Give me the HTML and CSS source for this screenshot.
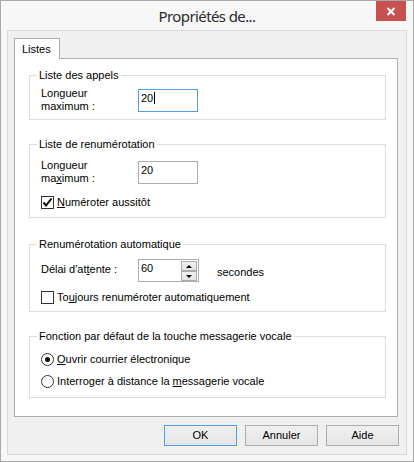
FILE: index.html
```html
<!DOCTYPE html>
<html lang="fr">
<head>
    <meta charset="UTF-8">
    <title>Propriétés de...</title>
    <link rel="stylesheet" href="styles.css">
</head>
<body>
    <div class="window">
        <div class="titlebar">
            <span class="title">Propriétés de...</span>
            <div class="close">
                <svg width="10" height="9" viewBox="0 0 10 9"><path d="M1.5 1 L8.5 8 M8.5 1 L1.5 8" stroke="#fff" stroke-width="2"/></svg>
            </div>
        </div>

        <div class="client">
            <div class="tabs">
                <div class="tab">Listes</div>
            </div>

            <div class="page">
                <!-- Liste des appels -->
                <fieldset class="group g-calls">
                    <legend>Liste des appels</legend>
                    <div class="row">
                        <div class="field-label">Longueur<br>maximum :</div>
                        <div class="edit focused">20<span class="caret"></span></div>
                    </div>
                </fieldset>

                <!-- Liste de renumérotation -->
                <fieldset class="group g-redial">
                    <legend>Liste de renumérotation</legend>
                    <div class="row">
                        <div class="field-label">Longueur<br>ma<u>x</u>imum :</div>
                        <div class="edit">20</div>
                    </div>
                    <div class="check-row">
                        <span class="checkbox checked">
                            <svg width="11" height="11" viewBox="0 0 11 11"><path d="M1.5 5.5 L4 8.5 L9.5 1.5" fill="none" stroke="#000" stroke-width="2"/></svg>
                        </span>
                        <span><u>N</u>uméroter aussitôt</span>
                    </div>
                </fieldset>

                <!-- Renumérotation automatique -->
                <fieldset class="group g-auto">
                    <legend>Renumérotation automatique</legend>
                    <div class="row center">
                        <div class="field-label">Délai d'at<u>t</u>ente :</div>
                        <div class="edit spin">
                            60
                            <div class="spin-buttons">
                                <div class="spin-btn"><span class="arrow up"></span></div>
                                <div class="spin-btn"><span class="arrow down"></span></div>
                            </div>
                        </div>
                        <span class="unit">secondes</span>
                    </div>
                    <div class="check-row">
                        <span class="checkbox"></span>
                        <span>To<u>u</u>jours renuméroter automatiquement</span>
                    </div>
                </fieldset>

                <!-- Touche messagerie vocale -->
                <fieldset class="group g-voice">
                    <legend>Fonction par défaut de la touche messagerie vocale</legend>
                    <div class="radio-row">
                        <span class="radio checked"></span>
                        <span><u>O</u>uvrir courrier électronique</span>
                    </div>
                    <div class="radio-row">
                        <span class="radio"></span>
                        <span>Interroger à distance la <u>m</u>essagerie vocale</span>
                    </div>
                </fieldset>
            </div>

            <div class="buttons">
                <div class="btn default">OK</div>
                <div class="btn">Annuler</div>
                <div class="btn">Aide</div>
            </div>
        </div>
    </div>
</body>
</html>
```

FILE: styles.css
```css
body {
    margin: 0;
    font-family: 'Liberation Sans', Arial, sans-serif;
    font-size: 11px;
    color: #000;
}
u {
    text-decoration-thickness: 1px;
    text-underline-offset: 1px;
}
.window {
    position: relative;
    width: 414px;
    height: 462px;
    box-sizing: border-box;
    border: 1px solid #a9a9a9;
    background: #f7f7f7;
    display: flex;
    flex-direction: column;
}
.titlebar {
    height: 29px;
    line-height: 30px;
    text-align: center;
    flex-shrink: 0;
}
.title {
    font-family: 'Noto Sans', sans-serif;
    font-size: 15px;
    letter-spacing: -0.6px;
    color: #2b2b2b;
}
.close {
    position: absolute;
    top: 0;
    right: 7px;
    width: 30px;
    height: 20px;
    background: #c75050;
    display: flex;
    align-items: center;
    justify-content: center;
}
.close svg { display: block; }

.client {
    margin: 0 6px 6px 6px;
    flex: 1;
    border: 1px solid #d9d9d9;
    background: #f0f0f0;
    padding: 7px 7px 0 6px;
    display: flex;
    flex-direction: column;
}
.tabs {
    display: flex;
    position: relative;
    z-index: 1;
    margin-bottom: -1px;
}
.tab {
    width: 46px;
    height: 21px;
    box-sizing: border-box;
    border: 1px solid #adadad;
    border-bottom: none;
    background: #fff;
    padding: 4px 0 0 7px;
    line-height: 13px;
}
.page {
    width: 384px;
    height: 359px;
    box-sizing: border-box;
    border: 1px solid #adadad;
    background: #fff;
    padding-top: 10px;
}

/* group boxes */
.group {
    margin: 0 11px 0 14px;
    padding: 0 11px;
    border: 1px solid #dcdcdc;
    min-inline-size: 0;
}
.group legend {
    margin-left: -4px;
    padding: 0 2px;
    line-height: 13px;
}
.g-calls { padding-bottom: 6px; }
.g-redial { margin-top: 18px; padding-bottom: 8px; }
.g-auto { margin-top: 20px; padding-bottom: 7px; }
.g-voice { margin-top: 18px; padding-bottom: 9px; }

.row {
    display: flex;
    align-items: flex-start;
}
.g-calls .row { margin-top: 5px; }
.g-redial .row { margin-top: 8px; }
.g-auto .row { margin-top: 8px; }
.field-label {
    width: 97px;
    line-height: 13px;
}
.row .edit { margin-top: 2px; }
.row.center { align-items: center; }
.row.center .edit { margin-top: 0; }
.row.center .field-label { margin-top: -2px; }

.edit {
    position: relative;
    width: 60px;
    height: 23px;
    box-sizing: border-box;
    border: 1px solid #abadb3;
    background: #fff;
    padding: 2px 2px;
    line-height: 13px;
}
.edit.focused { border-color: #569de5; }
.caret {
    display: inline-block;
    width: 1px;
    height: 12px;
    background: #000;
    vertical-align: -2px;
    margin-left: 1px;
}
.spin { width: 61px; }
.spin-buttons {
    position: absolute;
    top: 1px;
    right: 1px;
    display: flex;
    flex-direction: column;
}
.spin-btn {
    width: 16px;
    height: 10px;
    box-sizing: border-box;
    border: 1px solid #acacac;
    background: linear-gradient(#f2f2f2, #e4e4e4);
    display: flex;
    align-items: center;
    justify-content: center;
}
.arrow {
    width: 0;
    height: 0;
    border-left: 3px solid transparent;
    border-right: 3px solid transparent;
}
.arrow.up { border-bottom: 3px solid #000; }
.arrow.down { border-top: 3px solid #000; }
.unit {
    margin-left: 18px;
    margin-top: 3px;
}

.check-row,
.radio-row {
    display: flex;
    align-items: center;
    gap: 3px;
    height: 13px;
    line-height: 13px;
}
.g-redial .check-row { margin-top: 11px; }
.g-auto .check-row { margin-top: 9px; }
.g-voice .radio-row:first-of-type { margin-top: 10px; }
.g-voice .radio-row + .radio-row { margin-top: 9px; }

.checkbox {
    width: 13px;
    height: 13px;
    box-sizing: border-box;
    border: 1px solid #333;
    background: #fff;
    display: flex;
    align-items: center;
    justify-content: center;
    flex-shrink: 0;
}
.checkbox svg { display: block; }
.radio {
    width: 13px;
    height: 13px;
    box-sizing: border-box;
    border: 1px solid #333;
    border-radius: 50%;
    background: #fff;
    display: flex;
    align-items: center;
    justify-content: center;
    flex-shrink: 0;
}
.radio.checked::after {
    content: "";
    width: 5px;
    height: 5px;
    border-radius: 50%;
    background: #111;
}

/* dialog buttons */
.buttons {
    display: flex;
    justify-content: flex-end;
    gap: 8px;
    margin-top: 8px;
    width: 385px;
}
.btn {
    width: 73px;
    height: 21px;
    box-sizing: border-box;
    border: 1px solid #adadad;
    background: linear-gradient(#f0f0f0, #e5e5e5);
    text-align: center;
    line-height: 19px;
}
.btn.default { border-color: #4f9fe8; }
```
